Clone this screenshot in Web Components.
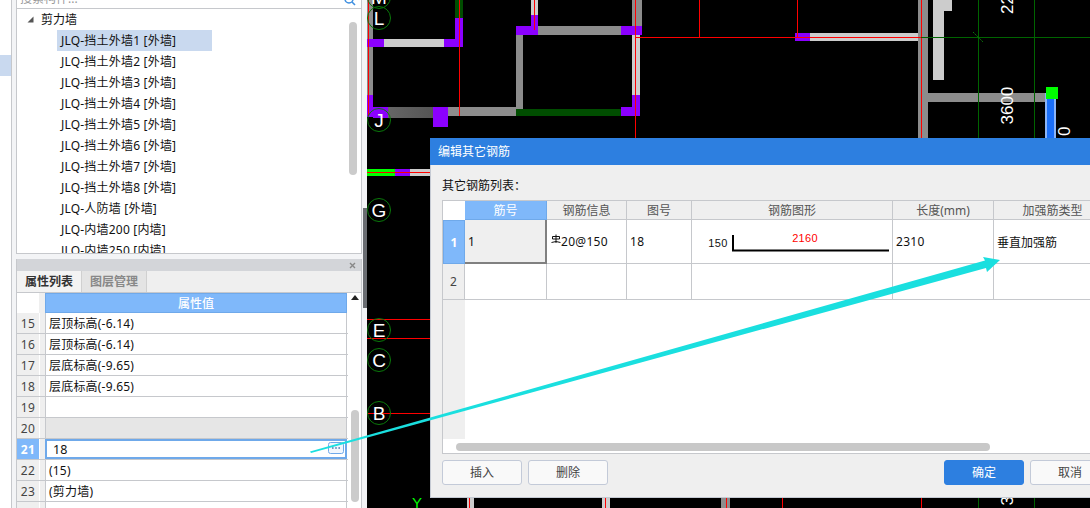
<!DOCTYPE html>
<html lang="zh"><head><meta charset="utf-8"><title>编辑其它钢筋</title>
<style>
html,body{margin:0;padding:0;width:1090px;height:508px;overflow:hidden;background:#fff;font:12px "Noto Sans","Noto Sans CJK SC",sans-serif;color:#111}
app-shell{width:1090px;height:508px}
</style></head><body>
<app-shell>
  <side-panel slot="side"></side-panel>
  <cad-canvas slot="canvas"></cad-canvas>
  <rebar-dialog slot="dialog"></rebar-dialog>
  <arrow-overlay slot="overlay"></arrow-overlay>
</app-shell>
<script>
function def(name, css, html, init){
  customElements.define(name, class extends HTMLElement{
    constructor(){super();const s=this.attachShadow({mode:'open'});s.innerHTML='<style>'+css+'</style>'+html;if(init)init(s,this);}
  });
}
const FONT='"Noto Sans","Noto Sans CJK SC",sans-serif';

def('app-shell',`
:host{display:block;position:relative;overflow:hidden}
.row{display:flex;height:100%}
.side{flex:0 0 367px;height:100%}
.canvas{flex:1;height:100%}
`,`<div class="row"><div class="side"><slot name="side"></slot></div><div class="canvas"><slot name="canvas"></slot></div></div>
<slot name="dialog"></slot><slot name="overlay"></slot>`);

/* Left side */
def('tree-row',`
:host{display:block;height:21px;line-height:21px;padding-left:40px;font-size:12px;white-space:nowrap;letter-spacing:.2px}
span{display:block;width:151px;padding-left:4px;height:21px}
:host([sel]) span{background:#c9d9ef}
`,`<span><slot></slot></span>`);

def('side-panel',`
:host{display:flex;height:100%;background:#fff;font:12px ${FONT};color:#111}
.rail{width:11px;border-right:1px solid #c6c8cc;padding-top:55px;box-sizing:content-box}
.rail i{display:block;height:21px;background:#c9d9ef}
.gap{width:4px;background:#f3f4f6}
.main{width:346px;display:flex;flex-direction:column}
.right{width:5px;background:#f3f4f6;position:relative}
.right i{position:absolute;left:1px;top:208px;width:4px;height:100px;background:#6a6d72}
.search{height:8px;flex:none;border:solid #c6c8cc;border-width:0 1px 1px;position:relative;overflow:hidden;background:#fff;color:#9a9a9a}
.search b{position:absolute;left:3px;top:-9px;font-weight:400;line-height:16px}
.search svg{position:absolute;right:4px;top:-7px}
.tree{height:245px;flex:none;border:solid #c6c8cc;border-width:0 1px 1px;position:relative;overflow:hidden;box-sizing:border-box}
.tree .root{height:21px;line-height:21px;padding-left:24px;position:relative}
.tree .root svg{position:absolute;left:10px;top:7px}
.list{overflow:hidden}
.vs{position:absolute;left:332px;top:13px;width:8px;height:153px;border-radius:4px;background:#cbcbcb}
.sp{height:5px;flex:none;background:#f3f4f6}
.bar{height:12px;flex:none;background:#d3d5d9;position:relative;border:solid #c6c8cc;border-width:0 1px}
.bar svg{position:absolute;right:5px;top:3px}
.tabs{display:flex;flex:none;height:22px;box-sizing:border-box;background:#efefef;border:solid #c6c8cc;border-width:0 1px;border-bottom:1px solid #c6c8cc}
.tab{width:64px;line-height:21px;text-align:center;font-size:12px;font-weight:600;border-right:1px solid #d0d0d0;box-sizing:content-box}
.tab.on{background:#f3f3f3;color:#333}
.tab.off{background:#e4e4e4;color:#888}
.tabfill{flex:1}
.grid{flex:1;position:relative;overflow:hidden;border-left:1px solid #c6c8cc;border-right:1px solid #c6c8cc}
.head{display:flex;height:20px}
.head .a{width:22px;background:#fff}
.head .b{width:6px;background:#efefef}
.head .h{width:302px;box-sizing:border-box;background:#7fb8fa;border:1px solid #6fa9ea;color:#fff;text-align:center;line-height:20px;font-weight:500}
.r{display:flex;height:21px;box-sizing:border-box;border-bottom:1px solid #c6c8cc}
.n{width:22px;background:#efefef;text-align:center;color:#444;line-height:21px;font-size:12px;letter-spacing:.4px}
.g{width:6px;background:#efefef;border-left:1px solid #fff;box-sizing:border-box}
.v{width:302px;box-sizing:border-box;padding-left:3px;line-height:21px;letter-spacing:.2px;border-left:1px solid #c6c8cc;border-right:1px solid #c6c8cc;background:#fff}
.r.gray .v{background:#e6e6e6}
.r.act .n{background:#7fb8fa;color:#fff;font-weight:700}
.r.act .v{border:2px solid #6fa9ea;padding-left:6px;line-height:18px;font-size:12.5px;position:relative;height:20px}
.more{position:absolute;right:1px;top:1px;width:16px;height:12px}
.sc{position:absolute;left:331px;top:0;bottom:0;width:14px;background:#fff}
.sc .up{position:absolute;left:3px;top:2px}
.sc .th{position:absolute;left:3px;top:117px;width:8px;height:92px;border-radius:4px;background:#cbcbcb}
`,`
<div class="rail"><i></i></div><div class="gap"></div>
<div class="main">
  <div class="search"><b>搜索构件...</b><svg width="14" height="13" viewBox="0 0 14 13"><circle cx="6" cy="6" r="4" fill="none" stroke="#3f8fe0" stroke-width="1.5"/><path d="M9 9l3 3" stroke="#3f8fe0" stroke-width="1.6"/></svg></div>
  <div class="tree">
    <div class="root"><svg width="8" height="8" viewBox="0 0 8 8"><path d="M6.500.5v6h-6z" fill="#555"/></svg>剪力墙</div>
    <div class="list">
      <tree-row sel>JLQ-挡土外墙1 [外墙]</tree-row>
      <tree-row>JLQ-挡土外墙2 [外墙]</tree-row>
      <tree-row>JLQ-挡土外墙3 [外墙]</tree-row>
      <tree-row>JLQ-挡土外墙4 [外墙]</tree-row>
      <tree-row>JLQ-挡土外墙5 [外墙]</tree-row>
      <tree-row>JLQ-挡土外墙6 [外墙]</tree-row>
      <tree-row>JLQ-挡土外墙7 [外墙]</tree-row>
      <tree-row>JLQ-挡土外墙8 [外墙]</tree-row>
      <tree-row>JLQ-人防墙 [外墙]</tree-row>
      <tree-row>JLQ-内墙200 [内墙]</tree-row>
      <tree-row>JLQ-内墙250 [内墙]</tree-row>
    </div>
    <div class="vs"></div>
  </div>
  <div class="sp"></div>
  <div class="bar"><svg width="7" height="7" viewBox="0 0 7 7"><path d="M1 1l5 5M6 1l-5 5" stroke="#888" stroke-width="1.4"/></svg></div>
  <div class="tabs"><div class="tab on">属性列表</div><div class="tab off">图层管理</div><div class="tabfill"></div></div>
  <div class="grid">
    <div class="head"><div class="a"></div><div class="b"></div><div class="h">属性值</div></div>
    <div class="r"><div class="n">15</div><div class="g"></div><div class="v">层顶标高(-6.14)</div></div>
    <div class="r"><div class="n">16</div><div class="g"></div><div class="v">层顶标高(-6.14)</div></div>
    <div class="r"><div class="n">17</div><div class="g"></div><div class="v">层底标高(-9.65)</div></div>
    <div class="r"><div class="n">18</div><div class="g"></div><div class="v">层底标高(-9.65)</div></div>
    <div class="r"><div class="n">19</div><div class="g"></div><div class="v"></div></div>
    <div class="r gray"><div class="n">20</div><div class="g"></div><div class="v"></div></div>
    <div class="r act"><div class="n">21</div><div class="g"></div><div class="v">18<svg class="more" viewBox="0 0 16 12"><rect x=".5" y=".5" width="15" height="11" rx="2" fill="#f2f7fd" stroke="#6fa9ea"/><path d="M4 6h1.600M7.200 6h1.600M10.400 6H12" stroke="#4a7cb0" stroke-width="1.400"/></svg></div></div>
    <div class="r"><div class="n">22</div><div class="g"></div><div class="v">(15)</div></div>
    <div class="r"><div class="n">23</div><div class="g"></div><div class="v">(剪力墙)</div></div>
    <div class="r"><div class="n"></div><div class="g"></div><div class="v"></div></div>
    <div class="sc"><svg class="up" width="8" height="5" viewBox="0 0 8 5"><path d="M4 0l4 5H0z" fill="#222"/></svg><div class="th"></div></div>
  </div>
</div>
<div class="right"><i></i></div>`);

/* CAD canvas */
const W=(x,y,w,h,c)=>`<rect x="${x}" y="${y}" width="${w}" height="${h}" fill="${c}"/>`;
const P='#8b00ff',G='#8c8c8c',L='#cccccc',R='#ff0000',DG='#006400',DW='#004d00';
const axis=(l,cy)=>`<circle cx="379" cy="${cy}" r="11.5" fill="none" stroke="#0a7a0a"/><text x="379" y="${cy+7}" text-anchor="middle" font-size="19" fill="#fff">${l}</text>`;
def('cad-canvas',`:host{display:block;width:100%;height:100%;background:#000}svg{display:block;font-family:"Liberation Sans",sans-serif}`,
`<svg width="723" height="508" viewBox="367 0 723 508">
${W(367,0,723,508,'#000')}
${W(367,0,6,96,G)}${W(367,39,17,8,P)}${W(384,39,60,8,L)}${W(444,39,19,8,P)}${W(455,18,8,29,P)}${W(455,0,8,18,DW)}
${W(367,95,6,22,P)}${W(373,107,15,11,P)}<defs><linearGradient id="gd"><stop offset="0" stop-color="#666"/><stop offset="1" stop-color="#555"/></linearGradient></defs>${W(388,107,45,11,'url(#gd)')}${W(433,107,15,20,P)}${W(448,107,68,9,G)}
${W(516,35,7,74,G)}${W(516,109,105,7,DW)}${W(621,107,19,9,P)}${W(632,95,8,21,P)}
${W(516,26,22,9,P)}${W(531,15,7,15,P)}${W(531,0,7,15,L)}${W(538,26,83,9,G)}${W(621,26,21,9,P)}${W(632,0,10,26,G)}${W(632,35,8,60,L)}
${W(795,33,15,8,P)}${W(810,33,108,8,L)}
${W(918,0,10,138,G)}${W(933,0,11,80,L)}${W(944,0,8,11,L)}${W(928,93,117,9,G)}
${W(1045,93,11,45,'#8ab4f8')}${W(1047,93,7,45,'#1a6ffa')}${W(1046,87,12,12,'#00ff00')}
${W(367,169,28,7,'#00ff00')}${W(395,169,15,7,P)}${W(410,169,20,7,L)}
${W(368,0,1,116,R)}${W(459,0,1,116,R)}${W(534,0,1,30,R)}${W(635,0,1,138,R)}${W(699,0,1,37,R)}${W(797,0,1,37,R)}${W(921,0,1,138,R)}
${W(636,37,285,1,R)}${W(921,37,169,1,DG)}${W(978,0,1,138,DG)}${W(1034,0,1,138,DG)}
<path d="M973 32l10 10" stroke="#0a7a0a" stroke-dasharray="2 1"/>
${W(367,172,63,1,R)}${W(367,319,63,1,R)}${W(367,338,63,1,R)}${W(367,413,63,1,R)}
${axis('M',-3)}${axis('L',18)}${axis('J',120)}${axis('G',210)}${axis('E',330)}${axis('C',360)}${axis('B',413)}
<text x="417" y="508" text-anchor="middle" font-size="15" fill="#00ff00">Y</text>
${W(467,498,7,10,L)}${W(469,498,1,10,R)}${W(602,498,8,10,L)}${W(605,498,1,10,R)}${W(721,498,9,10,G)}${W(726,498,1,10,R)}
${W(782,498,1,10,R)}${W(921,498,1,10,R)}${W(978,498,1,10,DG)}${W(1034,498,1,10,DG)}
<g fill="#fff" font-size="17">
<text transform="translate(1013,124.500) rotate(-90)">3600</text>
<text transform="translate(1013,14) rotate(-90)">22</text>
<text transform="translate(1013,505.500) rotate(-90)">3</text>
<text transform="translate(1070,136) rotate(-90)">0</text>
</g>
</svg>`);

/* Dialog */
def('ui-button',`
:host{display:inline-block;flex:none;width:80px;height:25px;box-sizing:border-box;border:1px solid #c3cad8;border-radius:3px;background:#f9f9f9;color:#444;text-align:center;line-height:24px;font-size:12px}
:host([primary]){background:#2d7fe0;border-color:#2d7fe0;color:#fff}
`,`<slot></slot>`);

def('rebar-dialog',`
:host{display:flex;flex-direction:column;position:absolute;left:430px;top:138px;width:720px;height:360px;box-sizing:border-box;background:#efefef;border-left:1px solid #c5cad3;border-bottom:1px solid #c5cad3;font:12px ${FONT};color:#111}
.title{height:27px;flex:none;margin-left:-1px;background:#2d7fe0;color:#fff;line-height:27px;padding-left:8px;font-size:12px}
.body{flex:1;display:flex;flex-direction:column;padding:0 0 0 11px}
.cap{height:35px;flex:none;line-height:41px;box-sizing:border-box}
.table{height:254px;flex:none;background:#fff;border:1px solid #c6c8cc;box-sizing:border-box;position:relative;overflow:hidden}
.g{display:grid;grid-template-columns:22px 82px 80px 65px 201px 101px 118px;grid-template-rows:19px 44px 36px;width:669px;letter-spacing:.3px}
.g>div{box-sizing:border-box;border-right:1px solid #c6c8cc;border-bottom:1px solid #c6c8cc;padding-left:3px;display:flex;align-items:center;white-space:nowrap}
.g>div.hd{background:#efefef;justify-content:center;padding:0;color:#555;letter-spacing:0}
.g>div.hd.sel{background:#7fb8fa;color:#fff;border-right:1px solid #6fa9ea;border-bottom:1px solid #6fa9ea}
.g>div.corner{background:#fff;border:0}
.g>div.no{background:#efefef;justify-content:center;padding:0;color:#444}
.g>div.no.sel{background:#7fb8fa;color:#fff;font-weight:700;border:1px solid #6fa9ea}
.g>div.cur{background:#efefef;border-right:2px solid #808080;border-bottom:2px solid #808080}
.g>div.shape{padding:0}
.g>div.cn{letter-spacing:0}
.rail{position:absolute;left:0;top:99px;width:22px;height:139px;background:#efefef}
.hs{position:absolute;left:13px;top:242px;width:534px;height:8px;border-radius:4px;background:#c8c8c8}
.foot{display:flex;flex:none;height:25px;margin-top:6px;gap:6px}
.sp{width:324px;flex:none}
svg{display:block}
`,`
<div class="title">编辑其它钢筋</div>
<div class="body">
  <div class="cap">其它钢筋列表：</div>
  <div class="table">
    <div class="g">
      <div class="corner"></div><div class="hd sel">筋号</div><div class="hd">钢筋信息</div><div class="hd">图号</div><div class="hd">钢筋图形</div><div class="hd">长度(mm)</div><div class="hd">加强筋类型</div>
      <div class="no sel">1</div><div class="cur">1</div>
      <div><svg width="10" height="10" viewBox="0 0 10 10" style="margin:-5px 0 0 1px"><path d="M1.500 5V2.500h7V5zM5 .5V9M.5 8.500l4.500-1 4.500 1" fill="none" stroke="#111"/></svg>20@150</div>
      <div>18</div>
      <div class="shape"><svg width="200" height="43" viewBox="692 220 200 43"><text x="718" y="247" text-anchor="middle" font-size="11" font-family="Liberation Sans" fill="#111">150</text><path d="M733 235v15.500h156" fill="none" stroke="#000" stroke-width="2"/><text x="805" y="242" text-anchor="middle" font-size="11" font-family="Liberation Sans" fill="#f00">2160</text></svg></div>
      <div>2310</div><div class="cn">垂直加强筋</div>
      <div class="no">2</div><div></div><div></div><div></div><div></div><div></div><div></div>
    </div>
    <div class="rail"></div>
    <div class="hs"></div>
  </div>
  <div class="foot"><ui-button>插入</ui-button><ui-button>删除</ui-button><div class="sp"></div><ui-button primary>确定</ui-button><ui-button>取消</ui-button></div>
</div>`);

def('arrow-overlay',`:host{display:block;position:absolute;left:0;top:0;width:1090px;height:508px;pointer-events:none}svg{display:block}`,
`<svg width="1090" height="508" viewBox="0 0 1090 508"><polygon points="310,451.500 985,260.500 983,257 1000,260 987,272 986,268 311,453" fill="#1adfdf"/></svg>`);
</script>
</body></html>
